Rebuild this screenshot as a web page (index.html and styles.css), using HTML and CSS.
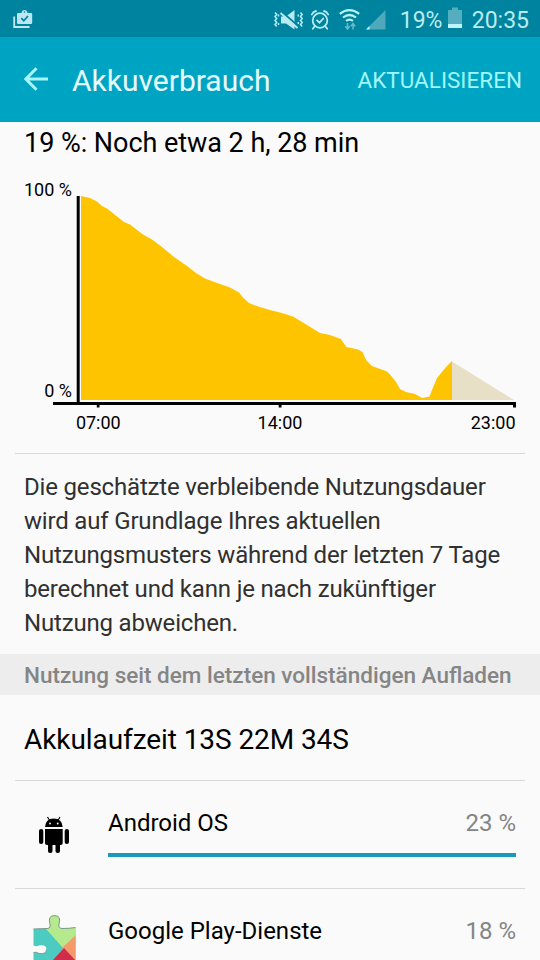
FILE: index.html
```
<!DOCTYPE html>
<html lang="de">
<head>
    <meta charset="UTF-8">
    <meta name="viewport" content="width=device-width, initial-scale=1.0">
    <title>Akkuverbrauch</title>
    <link rel="stylesheet" href="styles.css">
</head>
<body>
    <!-- Statusleiste -->
    <div class="statusbar">
        <svg class="icon-work" width="20" height="20" viewBox="0 0 20 20">
            <path d="M1.2 6.5V17H16.5" fill="none" stroke="#bfe9f1" stroke-width="1.8"/>
            <path d="M5.500 3H8.500Q9 0 11.500 0T14.500 3H18Q19.200 3 19.200 4.200V13Q19.200 14 18 14H5.500Q4 14 4 13V4.200Q4 3 5.500 3Z" fill="#bfe6ef"/>
            <circle cx="11.500" cy="2" r="0.8" fill="#00839e"/>
            <path d="M8.300 8.200L10.800 10.700L15 6" fill="none" stroke="#00839e" stroke-width="1.7"/>
        </svg>
        <svg class="icon-status" width="116" height="28" viewBox="272 5 116 28">
            <!-- Vibration / stumm -->
            <path d="M275 11.500l1.700 2-1.700 2 1.700 2-1.700 2 1.700 2-1.700 2 1.700 2M278.500 13.500v2M278.500 22v2M300.500 11.500l1.700 2-1.700 2 1.700 2-1.700 2 1.700 2-1.700 2 1.700 2M298.300 13.500v2M298.300 21v2" fill="none" stroke="#b5edf5" stroke-width="1.500"/>
            <path d="M281 15.500H286L294.500 9V28.500L286 22.500H281Z" fill="#b9e9f1"/>
            <path d="M281.500 10.500L298 25" stroke="#00839e" stroke-width="2"/>
            <path d="M280.500 12L297.500 27" stroke="#b9e9f1" stroke-width="1.900"/>
            <!-- Wecker -->
            <g fill="none" stroke="#b5edf5" stroke-width="1.800" stroke-linecap="round">
                <circle cx="320" cy="19.500" r="7.300"/>
                <path d="M311.800 13.500Q313 10.700 316 10M328.200 13.500Q327 10.700 324 10M314.500 25.500L312.800 27.800M325.500 25.500L327.200 27.800M317 19.300L319.500 21.700L323.300 17.500"/>
            </g>
            <!-- WLAN -->
            <g fill="none" stroke="#b5f3f8" stroke-width="2.200">
                <path d="M339.800 12.800Q349.500 5.500 359.200 12.800M343 16.500Q349.500 11.500 356 16.500M346 19.900Q349.500 17.200 353 19.900"/>
            </g>
            <path d="M347.500 22V28M345.300 25.300L347.500 28L349.700 25.300M353 28.500V22.500M350.800 25.200L353 22.500L355.200 25.200" fill="none" stroke="#60bccd" stroke-width="1.600"/>
            <!-- Mobilfunk -->
            <path d="M366 28.500L385.500 9V28.500Z" fill="#4fa9bb"/>
            <path d="M366 28.500L369.500 25V28.500Z" fill="#b5f3f8"/>
        </svg>
        <span class="battery-level">19%</span>
        <svg class="icon-battery" width="14" height="22" viewBox="0 0 14 22">
            <path d="M0 3H4V0.500H10V3H14V21H0Z" fill="#55aec0"/>
            <rect y="17" width="14" height="4" fill="#bdf5fa"/>
        </svg>
        <span class="clock">20:35</span>
    </div>

    <!-- Kopfzeile -->
    <header class="appbar">
        <svg class="back" width="24" height="24" viewBox="0 0 24 24">
            <path d="M24 12H2M12.500 1.200L1.900 12L12.500 22.800" fill="none" stroke="#a8f6fb" stroke-width="3"/>
        </svg>
        <h1>Akkuverbrauch</h1>
        <span class="refresh">AKTUALISIEREN</span>
    </header>

    <h2 class="remaining">19 %: Noch etwa 2 h, 28 min</h2>

    <!-- Akkuverlauf -->
    <svg class="chart" width="540" height="283" viewBox="0 170 540 283">
        <path class="level" d="M81 196L90 198L97 201.500L102 206L107 208.500L124 222L130 224.500L143 234.500L152 239.500L162 247L174 257L187 266L196 273L205 278.500L213 281.500L230 287.500L239 292.500L243 297.500L249 303L258 306.500L270 310L282 313L293 316.500L307 325L320 333L329 334.800L341 339L343.500 343L346.500 347L358 349.500L362.500 352L366 360L372 366L387 371.500L390 374.500L396 382L400 389L406 392L415 394L422 398L429.500 396.500L432 390L437 378L446 367L452 361V400H81Z"/>
        <path class="forecast" d="M452 361.500L514 400H452Z"/>
        <path class="axis" d="M76.700 196H79.700V402H516V407.500H513V405H281.500V407.500H278.700V405H99.500V407.500H96.800V405H53V402H76.700Z"/>
        <text x="72" y="196" text-anchor="end">100 %</text>
        <text x="72" y="397" text-anchor="end">0 %</text>
        <text x="98.300" y="428.500" text-anchor="middle">07:00</text>
        <text x="280" y="428.500" text-anchor="middle">14:00</text>
        <text x="515.500" y="428.500" text-anchor="end">23:00</text>
    </svg>

    <p class="hint">Die geschätzte verbleibende Nutzungsdauer<br>wird auf Grundlage Ihres aktuellen<br>Nutzungsmusters während der letzten 7 Tage<br>berechnet und kann je nach zukünftiger<br>Nutzung abweichen.</p>

    <h3 class="section"><span>Nutzung seit dem letzten vollständigen Aufladen</span></h3>
    <div class="runtime"><span>Akkulaufzeit 13S 22M 34S</span></div>

    <!-- Verbraucher -->
    <ul class="apps">
        <li>
            <svg class="app-icon" width="60" height="60" viewBox="24 806 60 60">
                <path d="M47.500 817L50 821M60 817L57.500 821" stroke="#000" stroke-width="1.200"/>
                <path d="M45 827Q45.500 818.500 53.800 818.500T62.700 827Z"/>
                <circle cx="50" cy="823.500" r="0.900" fill="#fff"/>
                <circle cx="57.700" cy="823.500" r="0.900" fill="#fff"/>
                <path d="M45 829H62.700V843Q62.700 845 60.700 845H47Q45 845 45 843Z"/>
                <rect x="39" y="829" width="4.300" height="15" rx="2.100"/>
                <rect x="64.700" y="829" width="4.300" height="15" rx="2.100"/>
                <rect x="48" y="842" width="4.500" height="11" rx="2"/>
                <rect x="55.500" y="842" width="4.500" height="11" rx="2"/>
            </svg>
            <div class="app-info">
                <div class="app-row"><span class="name">Android OS</span><span class="percent">23 %</span></div>
                <div class="bar"></div>
            </div>
        </li>
        <li>
            <svg class="app-icon" width="60" height="60" viewBox="24 914 60 60">
                <defs>
                    <clipPath id="puzzle">
                        <path d="M33.500 929Q42 928.500 48 928.500Q51 928 50 924Q47.500 915.800 54.500 915.500Q61.500 915.800 59 924Q58 928 62 928.500Q69 928.500 75.500 927.500V973H33.500V952.500Q36 951.500 39 953.500Q46.500 954.500 46.500 949.500Q46.500 944.500 39 945.500Q36 947 33.500 945.500Z"/>
                    </clipPath>
                </defs>
                <g clip-path="url(#puzzle)">
                    <rect x="30" y="910" width="50" height="65" fill="#4cccc0"/>
                    <path d="M44 910H80V942L64 949L46 929Z" fill="#b5e98d"/>
                    <path d="M76 935V970L62 948Z" fill="#f49a6b"/>
                    <path d="M64 948L76 961V973H40L53 960Z" fill="#d02d4b"/>
                </g>
                <path d="M33.500 929Q42 928.500 48 928.500Q51 928 50 924Q47.500 915.800 54.500 915.500Q61.500 915.800 59 924Q58 928 62 928.500Q69 928.500 75.500 927.500M33.500 952.500Q36 951.500 39 953.500Q46.500 954.500 46.500 949.500" fill="none" stroke="#789082" stroke-width="0.900"/>
            </svg>
            <div class="app-info">
                <div class="app-row"><span class="name">Google Play-Dienste</span><span class="percent">18 %</span></div>
            </div>
        </li>
    </ul>
</body>
</html>
```
FILE: styles.css
```
body {
    font-family: Roboto, "Liberation Sans", sans-serif;
    margin: 0;
    padding: 0;
    height: 960px;
    overflow: hidden;
    background-color: #fafafa;
    color: #000;
}
h1, h2, h3, p, ul {
    margin: 0;
    padding: 0;
    font-weight: normal;
}
svg {
    display: block;
    flex: none;
}
span {
    white-space: nowrap;
}
.statusbar {
    display: flex;
    align-items: center;
    box-sizing: border-box;
    height: 37px;
    padding: 2px 11px 0 13px;
    background-color: #00839e;
    color: #b9ecf3;
    font-size: 23px;
}
.icon-status {
    margin-left: auto;
}
.battery-level {
    width: 42px;
    margin-left: 12px;
}
.icon-battery {
    margin: 0 10px 3px 6px;
}
.clock {
    padding-top: 1px;
}
.battery-level {
    padding-top: 1px;
}
.appbar {
    display: flex;
    align-items: center;
    box-sizing: border-box;
    height: 85px;
    padding: 0 18px 0 24px;
    background-color: #00a4c3;
    border-bottom: 1px solid #1596ae;
}
.appbar h1 {
    margin-left: 24px;
    font-size: 30px;
    line-height: 34px;
    padding-top: 3px;
    color: #e4fcff;
}
.refresh {
    margin-left: auto;
    padding-top: 2px;
    font-size: 22.5px;
    color: #a0f7fb;
}
.remaining {
    height: 48px;
    padding-left: 24px;
    font-size: 27px;
    line-height: 42px;
    letter-spacing: -0.04px;
}
.chart {
    height: 283px;
}
.chart text {
    font-size: 18px;
}
.level {
    fill: #ffc400;
}
.forecast {
    fill: #e8e0c6;
}
.hint {
    box-sizing: border-box;
    height: 201px;
    margin: 0 15px;
    padding: 16px 0 0 9px;
    border-top: 1px solid #d9d9d9;
    font-size: 24px;
    line-height: 34px;
    letter-spacing: -0.18px;
    color: #303030;
    white-space: nowrap;
}
.section {
    height: 41px;
    padding-left: 24px;
    background-color: #ededed;
    color: #858585;
    font-size: 22.5px;
    font-weight: 500;
    line-height: 43px;
}
.runtime {
    height: 85px;
    padding-left: 24px;
    font-size: 28px;
    line-height: 89px;
    letter-spacing: -0.08px;
}
.apps {
    list-style: none;
    margin: 0 15px;
}
.apps li {
    display: flex;
    box-sizing: border-box;
    height: 108px;
    padding: 25px 9px 0;
    border-top: 1px solid #d9d9d9;
}
.app-info {
    flex: 1;
    margin-left: 24px;
}
.app-row {
    display: flex;
    justify-content: space-between;
    font-size: 24px;
    line-height: 34px;
}
.percent {
    color: #858585;
}
.bar {
    height: 4px;
    margin-top: 13px;
    background-color: #1a9abb;
}
```
